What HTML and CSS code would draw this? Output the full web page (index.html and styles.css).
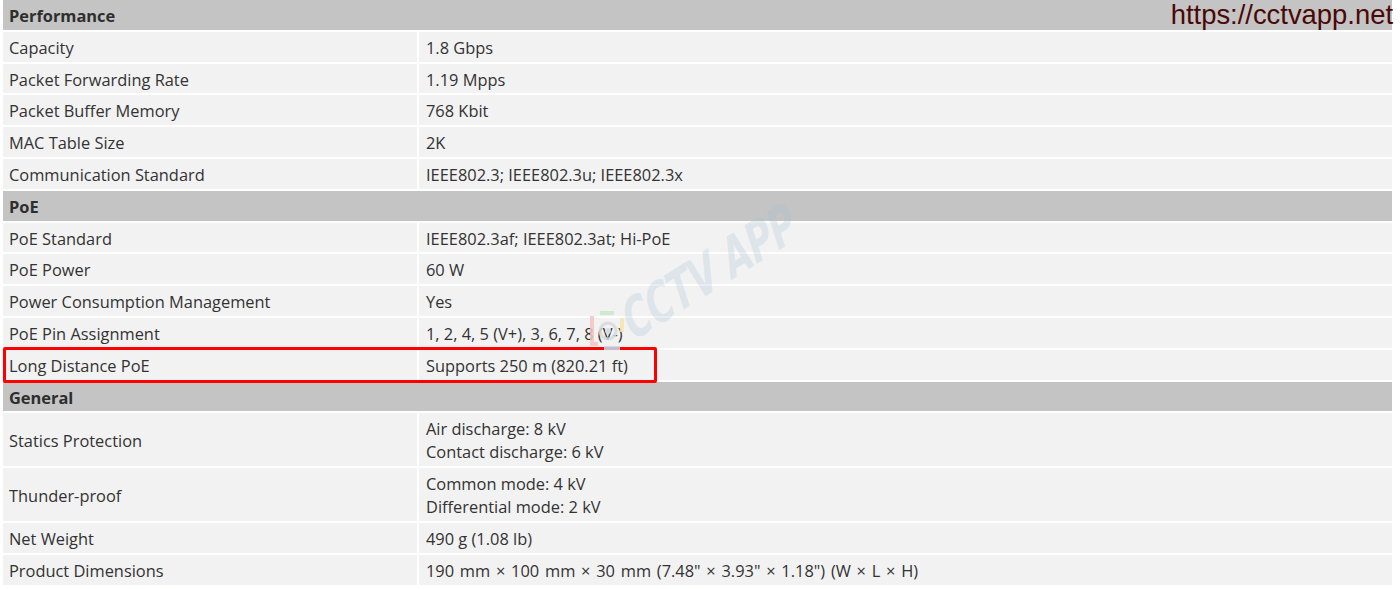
FILE: index.html
```html
<!DOCTYPE html>
<html>
<head>
<meta charset="utf-8">
<link rel="stylesheet" href="styles.css">
</head>
<body>
<div class="page">
  <table class="spec">
    <colgroup><col class="c1"><col class="c2"></colgroup>
    <tr class="sec"><td colspan="2">Performance</td></tr>
    <tr><td>Capacity</td><td>1.8 Gbps</td></tr>
    <tr><td>Packet Forwarding Rate</td><td>1.19 Mpps</td></tr>
    <tr><td>Packet Buffer Memory</td><td>768 Kbit</td></tr>
    <tr><td>MAC Table Size</td><td>2K</td></tr>
    <tr><td>Communication Standard</td><td>IEEE802.3; IEEE802.3u; IEEE802.3x</td></tr>
    <tr class="sec"><td colspan="2">PoE</td></tr>
    <tr><td>PoE Standard</td><td>IEEE802.3af; IEEE802.3at; Hi-PoE</td></tr>
    <tr><td>PoE Power</td><td>60 W</td></tr>
    <tr><td>Power Consumption Management</td><td>Yes</td></tr>
    <tr><td>PoE Pin Assignment</td><td>1, 2, 4, 5 (V+), 3, 6, 7, 8 (V-)</td></tr>
    <tr><td>Long Distance PoE</td><td>Supports 250 m (820.21 ft)</td></tr>
    <tr class="sec"><td colspan="2">General</td></tr>
    <tr class="two"><td>Statics Protection</td><td>Air discharge: 8 kV<br>Contact discharge: 6 kV</td></tr>
    <tr class="two"><td>Thunder-proof</td><td>Common mode: 4 kV<br>Differential mode: 2 kV</td></tr>
    <tr><td>Net Weight</td><td>490 g (1.08 lb)</td></tr>
    <tr><td>Product Dimensions</td><td class="dims">190 mm × 100 mm × 30 mm (7.48" × 3.93" × 1.18") (W × L × H)</td></tr>
  </table>

  <div class="url">https://cctvapp.net</div>
  <div class="highlight"></div>
  <div class="watermark">
    <svg class="wm-logo" width="44" height="44" viewBox="0 0 44 44">
      <path d="M6 8 L6 36 L12 36" fill="none" stroke="#f3c4c4" stroke-width="4"/>
      <path d="M14 5 L28 5" fill="none" stroke="#c8e8cc" stroke-width="4"/>
      <path d="M36 10 L36 24" fill="none" stroke="#f6e6b0" stroke-width="4"/>
      <path d="M18 40 L34 40" fill="none" stroke="#c4dbee" stroke-width="4"/>
      <circle cx="22" cy="23" r="8" fill="none" stroke="#d6dade" stroke-width="3"/>
      <circle cx="22" cy="23" r="3" fill="#d6dade"/>
    </svg>
    <span class="wm-text">CCTV APP</span>
  </div>
</div>
</body>
</html>
```
FILE: styles.css
```css
html, body {
  margin: 0;
  padding: 0;
  background: #ffffff;
}
.page {
  position: relative;
  width: 1400px;
  height: 589px;
  overflow: hidden;
}
.spec {
  border-collapse: separate;
  border-spacing: 2px;
  width: 1393px;
  margin: -2px 0 0 1px;
  table-layout: fixed;
  font-family: "Open Sans", "Noto Sans", sans-serif;
  font-size: 16.4px;
  color: #333333;
}
.c1 { width: 414px; }
.c2 { width: 973px; }
.spec td {
  background: #f2f2f2;
  height: 29.8px;
  box-sizing: border-box;
  padding: 4px 6px 2.8px;
  line-height: 23px;
  vertical-align: middle;
  white-space: nowrap;
}
.spec td + td {
  padding-left: 7px;
}
.spec td.dims {
  word-spacing: 1.5px;
}
.spec tr.two td {
  height: 53px;
}
.spec tr.sec td {
  background: #c3c4c3;
  font-weight: 700;
  color: #2e2e2e;
}
.url {
  position: absolute;
  top: 0;
  right: 7px;
  font-family: "Liberation Sans", Arial, sans-serif;
  font-size: 27.4px;
  line-height: 30px;
  color: #4a0808;
}
.highlight {
  position: absolute;
  left: 3px;
  top: 347px;
  width: 654px;
  height: 36px;
  box-sizing: border-box;
  border: 3px solid #ff0000;
  border-radius: 2px;
}
.watermark {
  position: absolute;
  left: 580px;
  top: 220px;
  width: 260px;
  height: 140px;
  pointer-events: none;
}
.wm-logo {
  position: absolute;
  left: 6px;
  top: 88px;
  opacity: 0.85;
}
.wm-text {
  position: absolute;
  left: 58px;
  top: 74px;
  font-family: "DejaVu Sans", sans-serif;
  font-style: italic;
  font-weight: 700;
  font-size: 54px;
  line-height: 56px;
  color: rgba(170, 195, 215, 0.28);
  transform: rotate(-32deg) scaleX(0.68) skewX(-10deg);
  transform-origin: left bottom;
  white-space: nowrap;
  letter-spacing: -1px;
}
```
